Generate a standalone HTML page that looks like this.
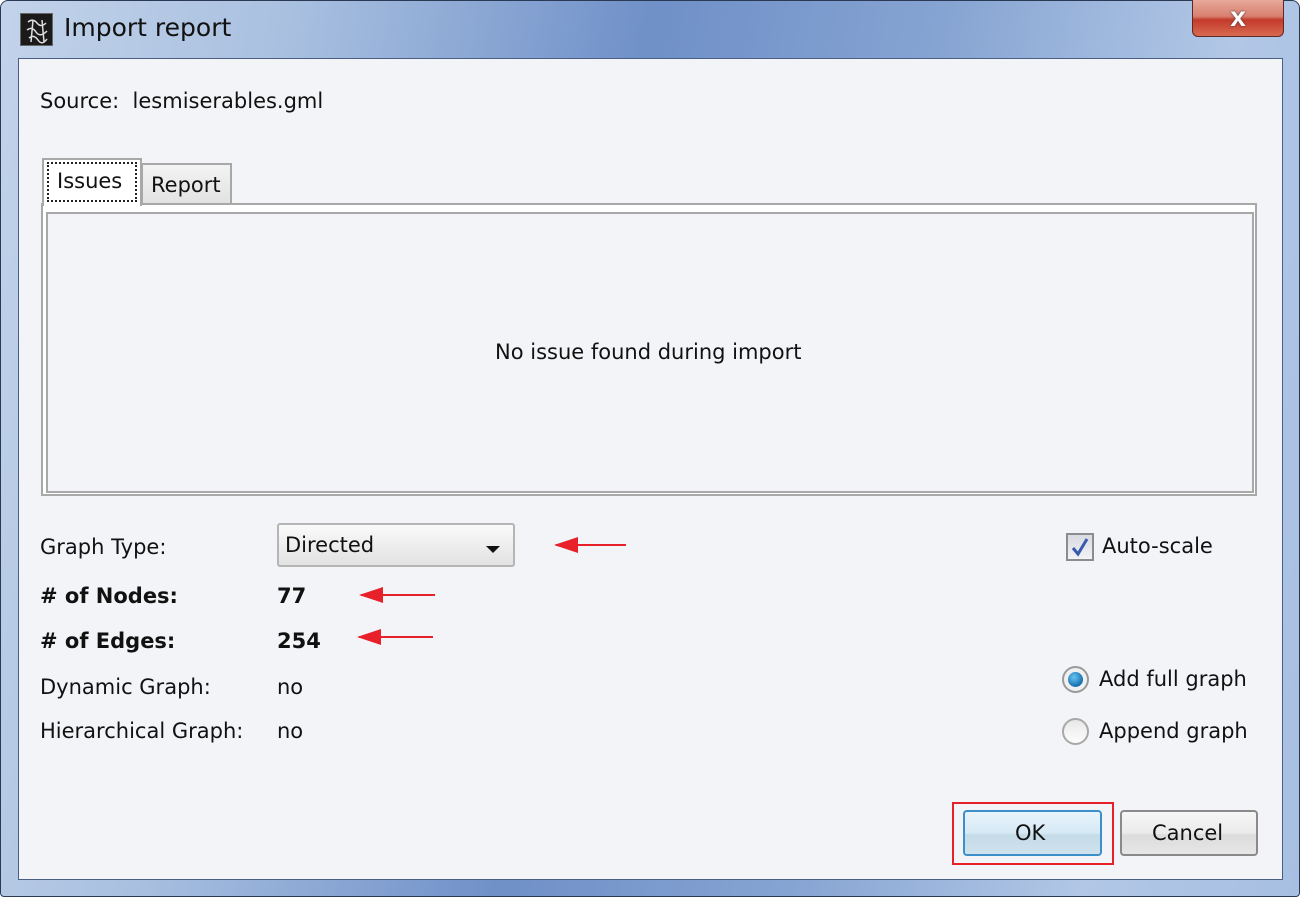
<!DOCTYPE html>
<html><head><meta charset="utf-8"><style>
*{margin:0;padding:0;box-sizing:border-box}
body{width:1302px;height:900px;background:#fff;position:relative;overflow:hidden;font-family:"DejaVu Sans","Liberation Sans",sans-serif;color:#111}
.frame{position:absolute;left:0;top:0;width:1300px;height:897px;border:1px solid #2a3a55;border-radius:8px 8px 4px 4px;
background:linear-gradient(100deg,#c2d3ea 0%,#a9c0e0 20%,#6f90c8 45%,#86a4d2 65%,#b2c7e6 85%,#a7bfe2 100%)}
.client{position:absolute;left:18px;top:58px;width:1265px;height:822px;background:#f2f4f7;border:1px solid #4a5f85}
.abs{position:absolute;white-space:nowrap}
.t{font-size:21px}
.close{position:absolute;left:1192px;top:0;width:92px;height:37px;border:1px solid #5a2a2a;border-top:none;border-radius:0 0 6px 6px;
background:linear-gradient(#e8a89a 0%,#d88070 45%,#c43a2a 55%,#d86a50 100%)}
.close span{position:absolute;left:0;right:0;top:1px;text-align:center;color:#fff;font:bold 28px "Liberation Sans",sans-serif;text-shadow:0 0 2px #333}
.icon{position:absolute;left:20px;top:13px;width:33px;height:33px;background:#1a1a1a;border:1px solid #666}
.arrow{position:absolute;height:2px;background:#e8202a}
.arrow:before{content:"";position:absolute;left:-2px;top:-7px;border-right:24px solid #e8202a;border-top:8px solid transparent;border-bottom:8px solid transparent}
</style></head><body>
<div class="frame"></div>
<div class="icon"><svg width="33" height="33"><g stroke="#ddd" stroke-width="1.5" fill="none"><path d="M7 8 Q12 4 16 9 T25 9 M6 16 Q11 12 15 18 T26 17 M8 24 Q13 20 17 26 T26 25 M12 6 L10 28 M21 6 L23 28"/></g></svg></div>
<div class="abs" style="left:64px;top:13px;font-size:25px;color:#111;font-family:'DejaVu Sans',sans-serif">Import report</div>
<div class="close"><span>x</span></div>
<div class="client"></div>

<div class="abs t" style="left:40px;top:89px">Source:&nbsp; lesmiserables.gml</div>

<div class="abs" style="left:141px;top:163px;width:91px;height:41px;border:2px solid #a8a8a8;border-bottom:none;background:linear-gradient(#f3f3f3,#e2e2e2)"></div>
<div class="abs t" style="left:151px;top:173px">Report</div>
<div class="abs" style="left:41px;top:203px;width:1216px;height:293px;border:2px solid #a8a8a8;background:#fff"></div>
<div class="abs" style="left:42px;top:158px;width:100px;height:48px;border:2px solid #a8a8a8;border-bottom:none;background:#fff"></div>
<div class="abs" style="left:47px;top:162px;width:90px;height:40px;border:2px dotted #222"></div>
<div class="abs t" style="left:57px;top:169px">Issues</div>
<div class="abs" style="left:46px;top:212px;width:1208px;height:281px;border:2px solid #a8a8a8;background:#f2f4f7"></div>
<div class="abs t" style="left:495px;top:340px">No issue found during import</div>

<div class="abs t" style="left:40px;top:535px">Graph Type:</div>
<div class="abs" style="left:277px;top:523px;width:238px;height:44px;border:2px solid #b5b5b5;border-radius:3px;background:linear-gradient(#fafafa,#e2e2e2)"></div>
<div class="abs t" style="left:285px;top:533px">Directed</div>
<div class="abs" style="left:486px;top:546px;border-top:7px solid #111;border-left:7px solid transparent;border-right:7px solid transparent"></div>
<div class="arrow" style="left:556px;top:544px;width:70px"></div>

<div class="abs t" style="left:40px;top:584px;font-weight:bold">#&nbsp;of Nodes:</div>
<div class="abs t" style="left:277px;top:584px;font-weight:bold">77</div>
<div class="arrow" style="left:361px;top:594px;width:74px"></div>
<div class="abs t" style="left:40px;top:629px;font-weight:bold">#&nbsp;of Edges:</div>
<div class="abs t" style="left:277px;top:629px;font-weight:bold">254</div>
<div class="arrow" style="left:359px;top:636px;width:74px"></div>
<div class="abs t" style="left:40px;top:675px">Dynamic Graph:</div>
<div class="abs t" style="left:277px;top:675px">no</div>
<div class="abs t" style="left:40px;top:719px">Hierarchical Graph:</div>
<div class="abs t" style="left:277px;top:719px">no</div>

<div class="abs" style="left:1066px;top:533px;width:28px;height:28px;border:2px solid #8c8c8c;background:linear-gradient(#d8dbe2,#f0f2f5)"></div>
<svg class="abs" style="left:1068px;top:535px" width="24" height="24"><path d="M5 13 L10 19 L19 4" stroke="#3a5ab0" stroke-width="3" fill="none"/></svg>
<div class="abs t" style="left:1102px;top:534px">Auto-scale</div>

<div class="abs" style="left:1062px;top:666px;width:27px;height:27px;border-radius:50%;border:2px solid #9a9a9a;background:#f0f0f0"></div>
<div class="abs" style="left:1068px;top:672px;width:15px;height:15px;border-radius:50%;background:radial-gradient(circle at 40% 35%,#6ac4ef,#1370b0 70%,#0a4c80)"></div>
<div class="abs t" style="left:1099px;top:667px">Add full graph</div>
<div class="abs" style="left:1062px;top:718px;width:27px;height:27px;border-radius:50%;border:2px solid #a8a8a8;background:linear-gradient(#e8e8e8,#fdfdfd)"></div>
<div class="abs t" style="left:1099px;top:719px">Append graph</div>

<div class="abs" style="left:952px;top:802px;width:162px;height:63px;border:2px solid #e8202a"></div>
<div class="abs" style="left:963px;top:810px;width:139px;height:46px;border:2px solid #3c8fc9;border-radius:4px;background:linear-gradient(#e8f4fb 0%,#d6e9f5 50%,#c4dbe8 55%,#cfe2ee 100%)"></div>
<div class="abs t" style="left:1015px;top:821px">OK</div>
<div class="abs" style="left:1120px;top:810px;width:138px;height:46px;border:2px solid #8a8a8a;border-radius:4px;background:linear-gradient(#f6f6f6 0%,#ebebeb 50%,#dcdcdc 55%,#e6e6e6 100%)"></div>
<div class="abs t" style="left:1152px;top:821px">Cancel</div>
</body></html>
